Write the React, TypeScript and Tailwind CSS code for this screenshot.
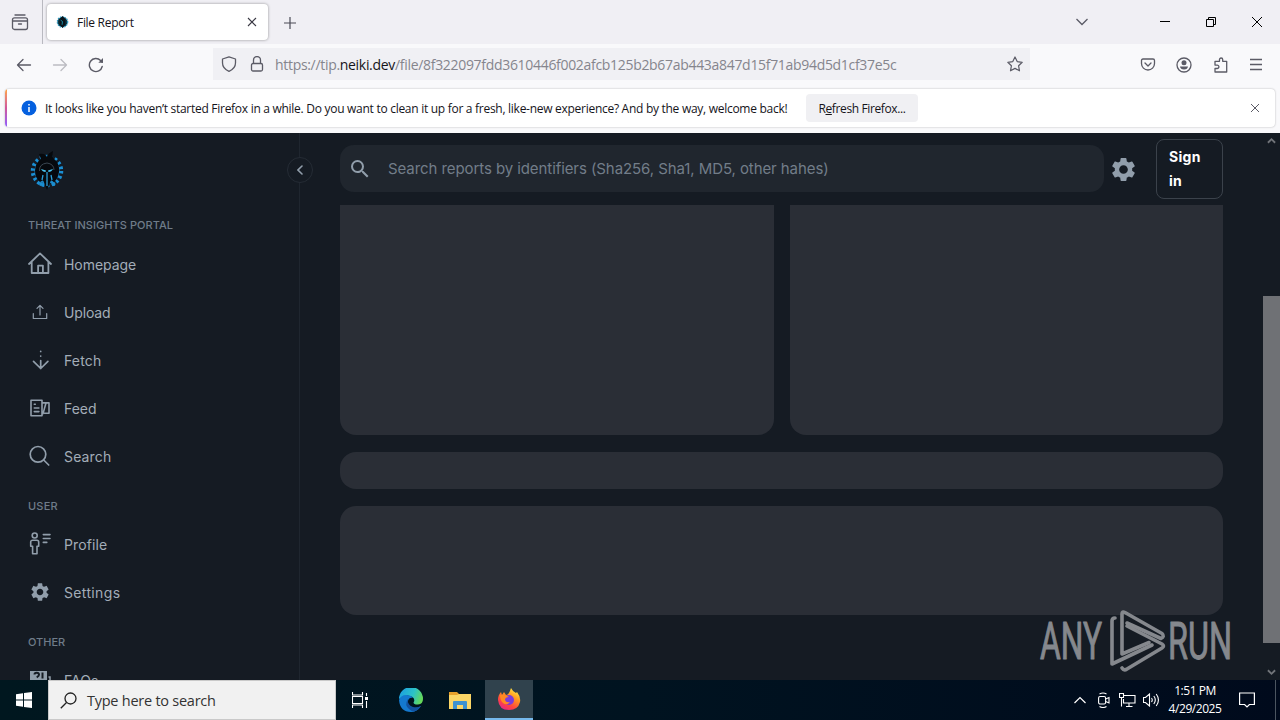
import React from "react";
import { MdSearch, MdSettings } from "react-icons/md";

interface NavItemProps {
  label: string;
  icon: React.ReactNode;
  className?: string;
}

const LineIcon: React.FC<{ children: React.ReactNode; width?: number }> = ({ children, width = 1.4 }) => (
  <svg
    viewBox="0 0 24 24"
    className="h-6 w-6 shrink-0"
    fill="none"
    stroke="currentColor"
    strokeWidth={width}
    strokeLinecap="round"
    strokeLinejoin="round"
  >
    {children}
  </svg>
);

const HomeIcon = () => (
  <LineIcon width={1.8}>
    <path d="M1 12 12 1.4 23 12M3.7 10v11h6.4v-7.4h4.8V21h5.5V10M10.1 21h4.8" />
  </LineIcon>
);

const UploadIcon = () => (
  <LineIcon width={1.2}>
    <path d="M12 15V5.5M9 8.3l3-3 3 3M5.3 13.5v5h13.4v-5" />
  </LineIcon>
);

const FetchIcon = () => (
  <LineIcon width={1.7}>
    <path d="M12.7 3.300v.1M12.7 8v.1M12.7 12.500v8M5.5 13.3l7.2 7.200 7.2-7.200" />
  </LineIcon>
);

const FeedIcon = () => (
  <LineIcon width={1.6}>
    <path d="M3 4.2h11v15.6H3zM14 6.9h7v10.4h-4.600M18 7l-3 10.600M6.300 8.2h1M6.300 12h4.600M6.300 15.6h4.600" />
  </LineIcon>
);

const FindIcon = () => (
  <LineIcon width={1.7}>
    <circle cx="10" cy="10.3" r="7.8" />
    <path d="m15.7 16 5 5" />
  </LineIcon>
);

const ProfileIcon = () => (
  <LineIcon width={1.6}>
    <circle cx="6.7" cy="3.5" r="2.5" />
    <path d="M4.500 8.2h4.400a1.800 1.8 0 0 1 1.800 1.8v4.3H9v7.400H4.600v-7.400H2.7V10a1.8 1.8 0 0 1 1.8-1.8zM15.300 2.6H22M15.300 6.5H22M15.300 10.4h3.500" />
  </LineIcon>
);

const FaqIcon = () => (
  <svg viewBox="0 0 24 24" className="h-6 w-6 shrink-0">
    <path d="M2 3h17v15h-6l-3 3v-3H2z" fill="#919eab" />
    <path d="M20.500 9h1.500v12h-8" fill="none" stroke="#919eab" strokeWidth="1.500" />
    <path d="M6.500 6.500q0-1.800 2.200-1.800 2.300 0 2.300 2 0 1.400-2.300 2.600M14.500 4.500v6" fill="none" stroke="#161c24" strokeWidth="2" />
  </svg>
);

const BrandMark: React.FC<{ className?: string }> = ({ className = "" }) => (
  <svg viewBox="0 0 38 40" className={className}>
    <circle cx="19" cy="20" r="13.500" fill="none" stroke="#1a8fd4" strokeWidth="5.500" strokeDasharray="2.400 2.310" />
    <circle cx="19" cy="20" r="11.500" fill="none" stroke="#1a86c6" strokeWidth="2" />
    <path
      d="M19 6q1-4 6-6-1 3 0 7 7 5 6 14-1 7-5 10l-3-2-4 10-4-10-3 2q-5-4-5-11 0-8 6-12L11 3q6-1 8 3z"
      fill="#06090d"
    />
    <path d="M11.500 20q-.5-7 7.500-8 7 1 7 7" fill="none" stroke="#3b4752" strokeWidth="1" />
    <path d="m13 18 5 1.500-.5 1.500q-3 0-4.500-3zM25 18l-5 1.500.5 1.500q3 0 4.500-3z" fill="#49c7f4" />
    <path d="M19 21v14M15 24l-1 5M23 24l1 5" stroke="#2b9ed8" strokeWidth="1.300" />
    <circle cx="13" cy="33" r="2" fill="#1c8dce" />
    <circle cx="25.500" cy="33" r="2" fill="#1c8dce" />
  </svg>
);

const NavItem: React.FC<NavItemProps> = ({ label, icon, className = "" }) => (
  <a className="flex h-12 items-center gap-3 pl-7 text-[#919eab]">
    {icon}
    <span className={`pt-px text-[14px] leading-[22px] text-[#a3adb8] ${className}`}>{label}</span>
  </a>
);

const NavTitle: React.FC<{ children: React.ReactNode; className?: string }> = ({ children, className = "" }) => (
  <div className={`h-10 pt-4 pl-7 text-[11px] leading-[20px] font-medium text-[#6f7c89] ${className}`}>{children}</div>
);

const TabStrip = () => (
  <div className="flex h-11 shrink-0 items-center bg-[#f0eff4] text-[#5b5b66]">
    <div className="flex h-11 w-[43px] items-center justify-center border-r border-[#b9b9c0] pr-[2px]">
      <svg viewBox="0 0 18 18" className="h-[18px] w-[18px]" fill="none" stroke="currentColor" strokeWidth="1.300" strokeLinecap="round">
        <path d="M4 2h10" />
        <rect x="1.500" y="4.800" width="15" height="11.700" rx="2" />
        <path d="M2 8h14M7.500 11h3" />
      </svg>
    </div>
    <div className="ml-1 flex h-9 w-[221px] items-center rounded bg-white pr-[11px] pl-[9px] shadow-[0_0_3px_rgba(0,0,0,0.4)]">
      <svg viewBox="0 0 14 16" className="h-4 w-[13px]">
        <circle cx="7" cy="8" r="5.500" fill="#0b2f3c" stroke="#2d9cc4" strokeWidth="1.500" strokeDasharray="1.500 1" />
        <path d="M7 1.500 10 5v6l-3 3.500L4 11V5z" fill="#081319" />
        <path d="m5 6 2 1.500L6.500 11" stroke="#1792ac" fill="none" />
      </svg>
      <span className="ml-[8px] pt-[2px] font-['Open_Sans',sans-serif] text-[12px] tracking-[-0.300px] text-[#15141a]">File Report</span>
      <svg viewBox="0 0 10 10" className="ml-auto h-[10px] w-[10px]" stroke="#3a3944" strokeWidth="1.100">
        <path d="m1 1 8 8M9 1 1 9" />
      </svg>
    </div>
    <svg viewBox="0 0 12 12" className="mt-px ml-4 h-3 w-3" stroke="#4a4a55" strokeWidth="1.200">
      <path d="M6 0v12M0 6h12" />
    </svg>
    <svg viewBox="0 0 12 8" className="ml-auto h-2 w-3" fill="none" stroke="currentColor" strokeWidth="1.300">
      <path d="m.500 1 5.500 5.500L11.500 1" />
    </svg>
    <div className="mr-[18px] ml-[72px] flex items-center gap-[36px]">
      <svg viewBox="0 0 10 10" className="h-[10px] w-[10px]" stroke="#000" strokeWidth="1">
        <path d="M0 4.500h10" />
      </svg>
      <svg viewBox="0 0 10 10" className="h-[10px] w-[10px]" fill="none" stroke="#000" strokeWidth="1">
        <path d="M.5 2.500h7v7h-7zM2.500 2.500v-2h7v7h-2" />
      </svg>
      <svg viewBox="0 0 10 10" className="h-[10px] w-[10px]" stroke="#000" strokeWidth="1">
        <path d="m0 0 10 10M10 0 0 10" />
      </svg>
    </div>
  </div>
);

const Toolbar = () => (
  <div className="flex h-11 shrink-0 items-center bg-[#f9f9fb] pb-[2px] pl-4 text-[#5b5b66]">
    <svg viewBox="0 0 16 16" className="h-4 w-4" fill="none" stroke="#5b5b66" strokeWidth="1.300" strokeLinecap="round" strokeLinejoin="round">
      <path d="M14.500 8H1.500M7 2.500 1.500 8 7 13.500" />
    </svg>
    <svg viewBox="0 0 16 16" className="ml-5 h-4 w-4" fill="none" stroke="#bcbcc2" strokeWidth="1.300" strokeLinecap="round" strokeLinejoin="round">
      <path d="M1.500 8h13M9 2.500 14.500 8 9 13.500" />
    </svg>
    <svg viewBox="0 0 16 16" className="ml-5 h-4 w-4" fill="none" stroke="#5b5b66" strokeWidth="1.400" strokeLinecap="round">
      <path d="M14.200 9.500A6.500 6.500 0 1 1 12.600 3.600l1.600 1.600" />
      <path d="M15 1v4.700h-4.700z" fill="#5b5b66" stroke="none" />
    </svg>
    <div className="mt-[-2px] ml-[109px] flex h-8 w-[817px] items-center bg-[#f0f0f4] pr-[7px] pl-2">
      <svg viewBox="0 0 16 16" className="h-4 w-4" fill="none" stroke="currentColor" strokeWidth="1.300" strokeLinejoin="round">
        <path d="M8 .8 14.500 3v4q0 5.500-6.500 8.300Q1.500 12.500 1.500 7V3z" />
      </svg>
      <svg viewBox="0 0 16 16" className="ml-3 h-4 w-4" fill="none" stroke="currentColor" strokeWidth="1.300">
        <rect x="2.500" y="7.500" width="11" height="7.500" rx="1.500" />
        <path d="M4.500 7.500V4a3.500 3.500 0 0 1 7 0v3.500" />
      </svg>
      <span className="ml-[10px] pt-px font-['Open_Sans',sans-serif] text-[14px] tracking-[-0.310px] whitespace-nowrap text-[#85858d]">
        https://tip.<span className="text-[#15141a]">neiki.dev</span>/file/8f322097fdd3610446f002afcb125b2b67ab443a847d15f71ab94d5d1cf37e5c
      </span>
      <svg viewBox="0 0 16 16" className="ml-auto h-4 w-4 shrink-0" fill="none" stroke="currentColor" strokeWidth="1.200" strokeLinejoin="round">
        <path d="m8 1 2.200 4.600 5 .7-3.600 3.500.9 5L8 12.400l-4.500 2.400.9-5L.8 6.300l5-.7z" />
      </svg>
    </div>
    <div className="mr-4 ml-auto flex items-center gap-5">
      <svg viewBox="0 0 16 16" className="h-4 w-4" fill="none" stroke="currentColor" strokeWidth="1.300" strokeLinecap="round" strokeLinejoin="round">
        <path d="M3 2h10q1.500 0 1.500 1.500v3a6.500 6.500 0 0 1-13 0v-3Q1.500 2 3 2z" />
        <path d="m5 6 3 3 3-3" />
      </svg>
      <svg viewBox="0 0 16 16" className="h-4 w-4" fill="none" stroke="currentColor" strokeWidth="1.300">
        <circle cx="8" cy="8" r="7" />
        <circle cx="8" cy="5.800" r="2.500" fill="currentColor" stroke="none" />
        <path d="M4 9.500h8q-.4 3-4 3t-4-3z" fill="currentColor" stroke="none" />
      </svg>
      <svg viewBox="0 0 16 16" className="ml-px h-4 w-4" fill="none" stroke="currentColor" strokeWidth="1.300" strokeLinejoin="round">
        <path d="M2 6V4.300h4.500V2.600a1.600 1.600 0 0 1 3.200 0v1.700h4V15H2v-3.500h2.200a1.700 1.700 0 0 0 0-3.400H2z" />
      </svg>
      <svg viewBox="0 0 16 16" className="-ml-px h-4 w-4" fill="none" stroke="currentColor" strokeWidth="1.300">
        <path d="M2 2.500h12M2 7.500h12M2 12.500h12" />
      </svg>
    </div>
  </div>
);

const NotificationBar = () => (
  <div className="h-[45px] shrink-0 bg-[#f9f9fb] px-[5px] pt-[1px]">
    <div className="flex h-[38px] overflow-hidden rounded bg-white shadow-[0_0_2px_rgba(0,0,0,0.3)]">
      <div className="w-[2px] bg-gradient-to-b from-[#ffa436] via-[#d0559a] to-[#9059ff]" />
      <div className="flex flex-1 items-center pl-[14px] font-['Open_Sans',sans-serif] text-[12px] text-[#15141a]">
        <svg viewBox="0 0 16 16" className="h-4 w-4">
          <circle cx="8" cy="8" r="7.500" fill="#0560df" />
          <path d="M8 4v1.600M8 7v5" stroke="#fff" strokeWidth="1.500" />
        </svg>
        <span className="ml-[8px] w-[743px] pt-[2px] tracking-[-0.280px] whitespace-nowrap">
          It looks like you haven’t started Firefox in a while. Do you want to clean it up for a fresh, like-new experience? And by the way, welcome back!
        </span>
        <button className="ml-[18px] h-7 w-[112px] rounded bg-[#f0f0f3] pt-[2px] tracking-[-0.380px] whitespace-nowrap">
          R<span className="underline">e</span>fresh Firefox...
        </button>
        <svg viewBox="0 0 8 8" className="mr-4 ml-auto h-2 w-2" stroke="#5b5b66" strokeWidth="1">
          <path d="m0 0 8 8M8 0 0 8" />
        </svg>
      </div>
    </div>
  </div>
);

const Sidebar = () => (
  <aside className="relative h-full w-[300px] shrink-0 border-r border-[#1f262f] font-[Inter,sans-serif]">
    <div className="h-[66px] pt-[18px] pl-[28px]">
      <BrandMark className="h-10 w-[38px]" />
    </div>
    <NavTitle className="mb-[1px] tracking-[0.050px]">THREAT INSIGHTS PORTAL</NavTitle>
    <NavItem label="Homepage" icon={<HomeIcon />} className="tracking-[-0.050px]" />
    <NavItem label="Upload" icon={<UploadIcon />} className="tracking-[-0.150px]" />
    <NavItem label="Fetch" icon={<FetchIcon />} className="tracking-[0.150px]" />
    <NavItem label="Feed" icon={<FeedIcon />} />
    <NavItem label="Search" icon={<FindIcon />} className="tracking-[0.150px]" />
    <NavTitle className="tracking-[0.200px]">USER</NavTitle>
    <NavItem label="Profile" icon={<ProfileIcon />} className="tracking-[0.100px]" />
    <NavItem label="Settings" icon={<MdSettings className="h-6 w-6 p-[1px]" />} className="tracking-[0.350px]" />
    <NavTitle>OTHER</NavTitle>
    <NavItem label="FAQs" icon={<FaqIcon />} />

    <button className="absolute top-[24px] right-[-14px] flex h-[26px] w-[26px] items-center justify-center rounded-full border border-[#252c35] bg-[#151b23]">
      <svg viewBox="0 0 6 10" className="h-[10px] w-[6px]" fill="none" stroke="#919eab" strokeWidth="1.600" strokeLinecap="round">
        <path d="M5 1 1 5l4 4" />
      </svg>
    </button>
  </aside>
);

const Watermark = () => (
  <svg
    viewBox="0 0 194 64"
    className="absolute right-[47px] bottom-[7px] h-16 w-[194px] overflow-visible"
    fill="none"
    stroke="#85888d"
    strokeWidth="3.600"
    strokeLinecap="round"
    strokeLinejoin="round"
  >
    <g fill="#85888d" strokeWidth="1" fontFamily="Roboto, sans-serif" fontSize="51">
      <text x="1" y="50" textLength="62" lengthAdjust="spacingAndGlyphs">ANY</text>
      <text x="129" y="50" textLength="64" lengthAdjust="spacingAndGlyphs">RUN</text>
    </g>
    <path d="M76 9q-3 0-3 3v43l40-19" />
    <path d="M83 45V5q0-3 3-1.500l37 21q3 3-1 5L88 14M83 45l27-11.500" />
    <path d="M83 59q2 3 5 1l35-21q3-2 0-4L88 17" />
  </svg>
);

const Content = () => (
  <main className="h-full w-[963px] shrink-0 pr-10 pl-10 font-[Inter,sans-serif]">
    <header className="flex h-[72px] items-center">
      <div className="mb-px flex h-[47px] w-[764px] items-center rounded-[14px] bg-[#20262e] pl-2">
        <MdSearch className="mt-px h-6 w-6 text-[#919eab]" />
        <span className="ml-4 pt-px text-[15px] tracking-[-0.080px] whitespace-nowrap text-[#727d89]">
          Search reports by identifiers (Sha256, Sha1, MD5, other hahes)
        </span>
      </div>
      <MdSettings className="ml-[5px] h-[29px] w-[29px] text-[#919eab]" />
      <button className="ml-[18px] h-[60px] w-[67px] rounded-lg border border-[#3b424b] px-3 text-left text-[14px] leading-6 font-bold tracking-[0.300px] text-white">
        Sign in
      </button>
    </header>
    <div className="flex w-[883px] flex-col gap-[17px]">
      <div className="grid grid-cols-2 gap-4">
        <div className="h-[230px] rounded-b-2xl bg-[#2a2e36]" />
        <div className="h-[230px] rounded-b-2xl bg-[#2a2e36]" />
      </div>
      <div className="h-[37px] rounded-2xl bg-[#2a2e36]" />
      <div className="h-[109px] rounded-2xl bg-[#2a2e36]" />
    </div>
  </main>
);

const Scrollbar = () => (
  <div className="flex h-full w-[17px] shrink-0 flex-col items-center pt-1 pb-1">
    <svg viewBox="0 0 10 7" className="h-[7px] w-[9px]" fill="none" stroke="#717479" strokeWidth="2">
      <path d="m1 6 4-4 4 4" />
    </svg>
    <div className="mt-[152px] h-[347px] w-full bg-[#6f7175]" />
    <svg viewBox="0 0 10 7" className="mt-auto h-[7px] w-[9px]" fill="none" stroke="#717479" strokeWidth="2">
      <path d="m1 1 4 4 4-4" />
    </svg>
  </div>
);

const EdgeIcon = () => (
  <svg viewBox="0 0 24 24" className="h-6 w-6">
    <defs>
      <linearGradient id="edge-top" x1="0" x2="1" y1=".2" y2=".5">
        <stop offset="0" stopColor="#1b9de2" />
        <stop offset=".6" stopColor="#2cc3c7" />
        <stop offset="1" stopColor="#65d95a" />
      </linearGradient>
    </defs>
    <path d="M0 11A12 12 0 0 1 24 11q0 5-5 5.500-4 .3-4.500-2 2-3-1-5.500Q7 5 0 11z" fill="url(#edge-top)" />
    <path d="M0 12q2-5 7-5 5 0 7 3-4-1-5 3-1 5 5 7 4 1 8-2-4 6-10 6Q1 24 0 12z" fill="#1479cf" />
    <path d="M9 11q-4 6 1 10 2 2 5 2.500 4-1 7-5.500-4 2-8 1-6-2-5-8z" fill="#1252a0" />
  </svg>
);

const FolderIcon = () => (
  <svg viewBox="0 0 22 19" className="h-[19px] w-[22px]">
    <path d="M0 1h8l2 2h11v4H0z" fill="#e7a12b" />
    <path d="M0 4h8l2-1h12v15H0z" fill="#fbd666" />
    <path d="M4 18v-7q0-1 1-1h12q1 0 1 1v7h-4v-4H8v4z" fill="#3e92cf" />
  </svg>
);

const FirefoxIcon = () => (
  <svg viewBox="0 0 24 24" className="h-6 w-6">
    <defs>
      <linearGradient id="fox" x1=".8" x2=".2" y1="0" y2="1">
        <stop offset="0" stopColor="#fff14a" />
        <stop offset=".35" stopColor="#ff9a1f" />
        <stop offset=".7" stopColor="#ff453f" />
        <stop offset="1" stopColor="#e5238f" />
      </linearGradient>
    </defs>
    <path d="M14 1q2 4 5 5l1-1q4 5 3 10-2 8-11 8Q2 23 1 13q0-5 3-8l1 3 2-3 2 3q3 0 5-7z" fill="url(#fox)" />
    <circle cx="12" cy="13" r="5" fill="#7a3cdb" />
    <path d="M3 8q5-1 9 2-4 0-4 3 1 3 5 2-3 4-7 1-3-3-3-8z" fill="#ff8a22" />
  </svg>
);

const Taskbar = () => (
  <div className="flex h-10 shrink-0 items-center bg-gradient-to-r from-[#00171f] via-[#001320] to-[#000a1c] font-['Open_Sans',sans-serif] text-white">
    <div className="flex w-12 justify-center">
      <svg viewBox="0 0 16 16" className="h-4 w-4" fill="#fff">
        <path d="M0 2.300 7 1.300v6.200H0zM8 1.100 16 0v7.500H8zM0 8.500h7v6.200l-7-1zM8 8.500h8V16l-8-1.100z" />
      </svg>
    </div>
    <div className="flex h-10 w-72 items-center border border-[#c9c9c9] bg-[#f1f1f1] pl-[11px]">
      <svg viewBox="0 0 17 17" className="h-[17px] w-[17px]" fill="none" stroke="#222" strokeWidth="1.300">
        <circle cx="10.500" cy="6.500" r="5.500" />
        <path d="M6.500 10.500.8 16.200" />
      </svg>
      <span className="ml-[10px] pt-px text-[14.500px] tracking-[-0.250px] whitespace-nowrap text-[#333]">Type here to search</span>
    </div>
    <div className="flex w-12 justify-center">
      <svg viewBox="0 0 17 16" className="h-4 w-[17px]" fill="none" stroke="#fff" strokeWidth="1.100">
        <path d="M.5 0v3h10V0M.5 16v-3h10v3M.5 4.500h10v7H.5zM14.500 1v3M14.500 9v7" />
        <path d="M13 5h3v3h-3z" fill="#fff" stroke="none" />
      </svg>
    </div>
    <div className="ml-[3px] flex w-12 justify-center">
      <EdgeIcon />
    </div>
    <div className="ml-[1px] flex w-12 justify-center">
      <FolderIcon />
    </div>
    <div className="ml-[1px] flex h-10 w-12 items-center justify-center border-b-2 border-[#76b9ed] bg-[#30424d]">
      <FirefoxIcon />
    </div>
    <div className="ml-auto flex items-center">
      <svg viewBox="0 0 12 8" className="h-2 w-3" fill="none" stroke="#fff" strokeWidth="1.200">
        <path d="m.5 7 5.500-5.500L11.500 7" />
      </svg>
      <svg viewBox="0 0 12 16" className="ml-3 h-4 w-3" fill="none" stroke="#fff" strokeWidth="1.100">
        <rect x=".6" y="4.500" width="7" height="7.500" rx="1.500" />
        <path d="m7.600 7 3.400-1.500v5.500L7.600 9.500M1.500 2q3.500-2 7 0M1.500 14.500q3.500 2 7 0" />
      </svg>
      <svg viewBox="0 0 17 14" className="ml-[9px] h-[14px] w-[17px]" fill="none" stroke="#fff" strokeWidth="1.100">
        <path d="M5 2.500h11v7.500H4.500V6M.5.500h4v4h-4zM2.500 4.500v9M10 10v3M7 13.500h6.500" />
      </svg>
      <svg viewBox="0 0 17 14" className="ml-[7px] h-[14px] w-[17px]" fill="none" stroke="#fff" strokeWidth="1.100">
        <path d="M.5 4.500h2L6.500 1v12l-4-3.500h-2zM8.500 5q1.500 2 0 4M10.800 3q3 4 0 8M13.200 1q4.500 6 0 12" />
      </svg>
      <div className="ml-[7px] w-[56px] text-center text-[12px] leading-[18px] tracking-[-0.450px] whitespace-nowrap">
        <div>1:51 PM</div>
        <div>4/29/2025</div>
      </div>
      <svg viewBox="0 0 16 16" className="mr-5 ml-[16px] h-4 w-4" fill="none" stroke="#fff" strokeWidth="1.200">
        <path d="M.6 1h14.800v11.500h-5L8 15l-2.400-2.500h-5z" />
      </svg>
      <div className="mr-1 h-10 w-px bg-[#4b5560]" />
    </div>
  </div>
);

export default function App() {
  return (
    <div className="flex h-[720px] w-[1280px] flex-col overflow-hidden">
      <TabStrip />
      <Toolbar />
      <NotificationBar />
      <div className="relative flex h-[547px] shrink-0 overflow-hidden bg-[#151b23]">
        <Sidebar />
        <Content />
        <Scrollbar />
        <Watermark />
      </div>
      <Taskbar />
    </div>
  );
}
